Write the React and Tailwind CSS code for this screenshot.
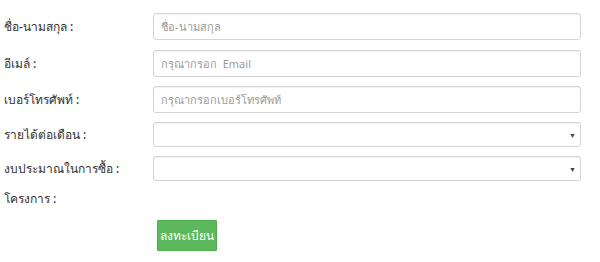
import React from 'react';

const font = { fontFamily: '"Noto Sans", "Liberation Sans", Tahoma, sans-serif' };

const Row = ({ label, children, className = '' }) => (
  <div className={`flex items-center ${className}`}>
    <label className="w-[153px] shrink-0 pl-1 text-[12px] leading-none font-medium text-[#333]">{label}</label>
    <div className="flex-1">{children}</div>
  </div>
);

const TextField = ({ placeholder }) => (
  <input
    type="text"
    placeholder={placeholder}
    className="block w-full h-[27px] px-[7px] border border-[#d4d4d4] rounded-[3px] bg-white text-[11px] text-[#555] placeholder-[#9a9a9a] shadow-[inset_0_1px_1px_rgba(0,0,0,0.06)] focus:outline-none"
  />
);

const SelectField = () => (
  <div className="relative">
    <select className="block w-full h-[25px] px-[7px] appearance-none border border-[#d4d4d4] rounded-[3px] bg-white text-[11px] text-[#555] shadow-[inset_0_1px_1px_rgba(0,0,0,0.06)] focus:outline-none">
      <option value=""></option>
    </select>
    <span className="pointer-events-none absolute right-[5px] top-1/2 -translate-y-1/2 text-[7px] leading-none text-[#444]">▼</span>
  </div>
);

export default function App() {
  return (
    <div style={font} className="w-[600px] h-[262px] bg-white pt-[13px] pr-[19px]">
      <Row className="h-[27px]" label="ชื่อ-นามสกุล  :">
        <TextField placeholder="ชื่อ-นามสกุล" />
      </Row>
      <Row className="h-[27px] mt-[10px]" label="อีเมล์  :">
        <TextField placeholder="กรุณากรอก  Email" />
      </Row>
      <Row className="h-[27px] mt-[9px]" label="เบอร์โทรศัพท์  :">
        <TextField placeholder="กรุณากรอกเบอร์โทรศัพท์" />
      </Row>
      <Row className="h-[25px] mt-[9px]" label="รายได้ต่อเดือน  :">
        <SelectField />
      </Row>
      <Row className="h-[25px] mt-[9px]" label="งบประมาณในการซื้อ  :">
        <SelectField />
      </Row>
      <Row className="h-[24px] mt-[6px]" label="โครงการ  :">
        <div className="h-[20px]" />
      </Row>
      <div className="pl-[157px] mt-[9px]">
        <button className="block h-[31px] w-[60px] bg-[#5cb85c] border border-[#4cae4c] text-white text-[12px] rounded-[1px]">
          ลงทะเบียน
        </button>
      </div>
    </div>
  );
}
